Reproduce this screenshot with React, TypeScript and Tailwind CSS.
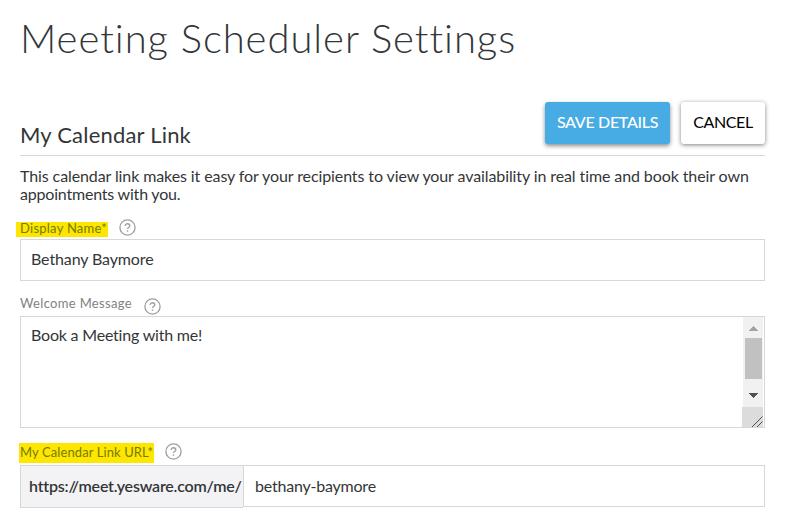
import type { ReactNode } from "react";

function HelpIcon({ className = "" }: { className?: string }) {
  return (
    <svg
      className={`h-[17px] w-[17px] flex-none ${className}`}
      viewBox="0 0 17 17"
      fill="none"
      stroke="#9c9ea1"
      strokeWidth="1.3"
    >
      <circle cx="8.5" cy="8.5" r="7.6" />
      <path d="M6.1 7.1V6.9a2.35 2.15 0 0 1 4.7 0c0 1.6-2.3 1.6-2.3 3.2" />
      <circle cx="8.5" cy="12" r="0.85" fill="#9c9ea1" stroke="none" />
    </svg>
  );
}

function Label({ children, className = "" }: { children: ReactNode; className?: string }) {
  return (
    <label className={`block whitespace-nowrap text-[13px] ${className}`}>
      {children}
    </label>
  );
}

function Scrollbar() {
  return (
    <div className="flex w-[22px] flex-none flex-col items-end">
      <svg className="h-[90px] w-[21px]" viewBox="0 0 21 90" shapeRendering="crispEdges">
        <rect width="20" height="90" fill="#f1f1f1" />
        <rect x="2" y="21" width="17" height="41" fill="#c1c1c1" />
        <path d="M6 14h9l-4-5h-1z" fill="#a3a3a3" />
        <path d="M6 76h9l-4 5h-1z" fill="#505050" />
      </svg>
      {/* Resize corner */}
      <svg className="h-5 w-[22px]" viewBox="0 0 22 20">
        <rect width="21" height="20" fill="#dcdcdc" />
        <path d="M10 20 20.5 9.5M15 20 20.5 14.5" stroke="#505050" strokeWidth="1" />
      </svg>
    </div>
  );
}

export default function App() {
  return (
    <div className="h-[522px] w-[800px] overflow-hidden bg-white pl-5 pr-[35px] pt-[14px] font-['Lato','Open_Sans',sans-serif] text-[#333638]">
      <h1 className="whitespace-nowrap text-[40px] font-light leading-[48px] tracking-[0.94px]">
        Meeting Scheduler Settings
      </h1>

      <div className="mt-10 flex h-[54px] items-start justify-between border-b border-[#d6d8d8]">
        <h2 className="mt-[19px] whitespace-nowrap text-[22px] leading-[28px] tracking-[0.2px]">My Calendar Link</h2>
        <div className="flex gap-[11px]">
          <button className="h-[42px] w-[125px] whitespace-nowrap rounded-[3px] bg-[#48ace4] pb-0.5 text-base font-medium tracking-[-0.3px] text-white shadow-[0_2px_4px_rgba(0,0,0,0.45)]">
            SAVE DETAILS
          </button>
          <button className="h-[42px] w-[84px] whitespace-nowrap rounded-[3px] bg-white pb-0.5 text-base tracking-[-0.4px] text-black shadow-[0_1px_4px_rgba(0,0,0,0.5)]">
            CANCEL
          </button>
        </div>
      </div>

      <p className="mt-[11px] whitespace-nowrap text-base leading-[18px] tracking-[-0.1px]">
        This calendar link makes it easy for your recipients to view your availability in real time and book their own
        <br />
        <span className="tracking-[-0.2px]">appointments with you.</span>
      </p>

      <div className="mt-4 flex h-5 items-start">
        <Label className="-ml-[4px] mt-[3px] h-[15px] w-[92px] bg-[#fee600] pl-[4px] leading-[13px] tracking-[0.25px] text-[#747b00]">
          Display Name*
        </Label>
        <HelpIcon className="ml-[11px]" />
      </div>
      <div className="flex h-[42px] items-center border border-[#d6d8d8] pb-0.5 pl-[10px]">
        <span className="text-base leading-5 tracking-[-0.12px]">Bethany Baymore</span>
      </div>

      <div className="mt-[15px] flex h-5 items-start">
        <Label className="w-[124px] leading-[15px] tracking-[0.33px] text-[#7f8284]">Welcome Message</Label>
        <HelpIcon className="mt-[2px]" />
      </div>
      <div className="flex h-[112px] justify-between border border-[#d6d8d8] pl-[10px]">
        <span className="mt-[8px] text-base leading-5 tracking-[-0.2px]">Book a Meeting with me!</span>
        <Scrollbar />
      </div>

      <div className="mt-[15px] flex h-[22px] items-start">
        <Label className="-ml-px h-5 w-[135px] bg-[#fee600] pl-px pt-[2px] leading-[15px] tracking-[0.1px] text-[#747b00]">
          My Calendar Link URL*
        </Label>
        <HelpIcon className="ml-[11px]" />
      </div>
      <div className="flex items-start">
        <div className="flex h-[43px] w-[223px] items-center border border-r-0 border-[#d6d8d8] bg-[#f3f3f6] pb-px pl-2">
          <span className="whitespace-nowrap text-base font-semibold leading-5 tracking-[-0.21px]">
            https://meet.yesware.com/me/
          </span>
        </div>
        <div className="flex h-[42px] w-[522px] items-center border border-[#d6d8d8] pb-px pl-[11px]">
          <span className="text-base leading-5 tracking-[-0.21px]">bethany-baymore</span>
        </div>
      </div>
    </div>
  );
}
